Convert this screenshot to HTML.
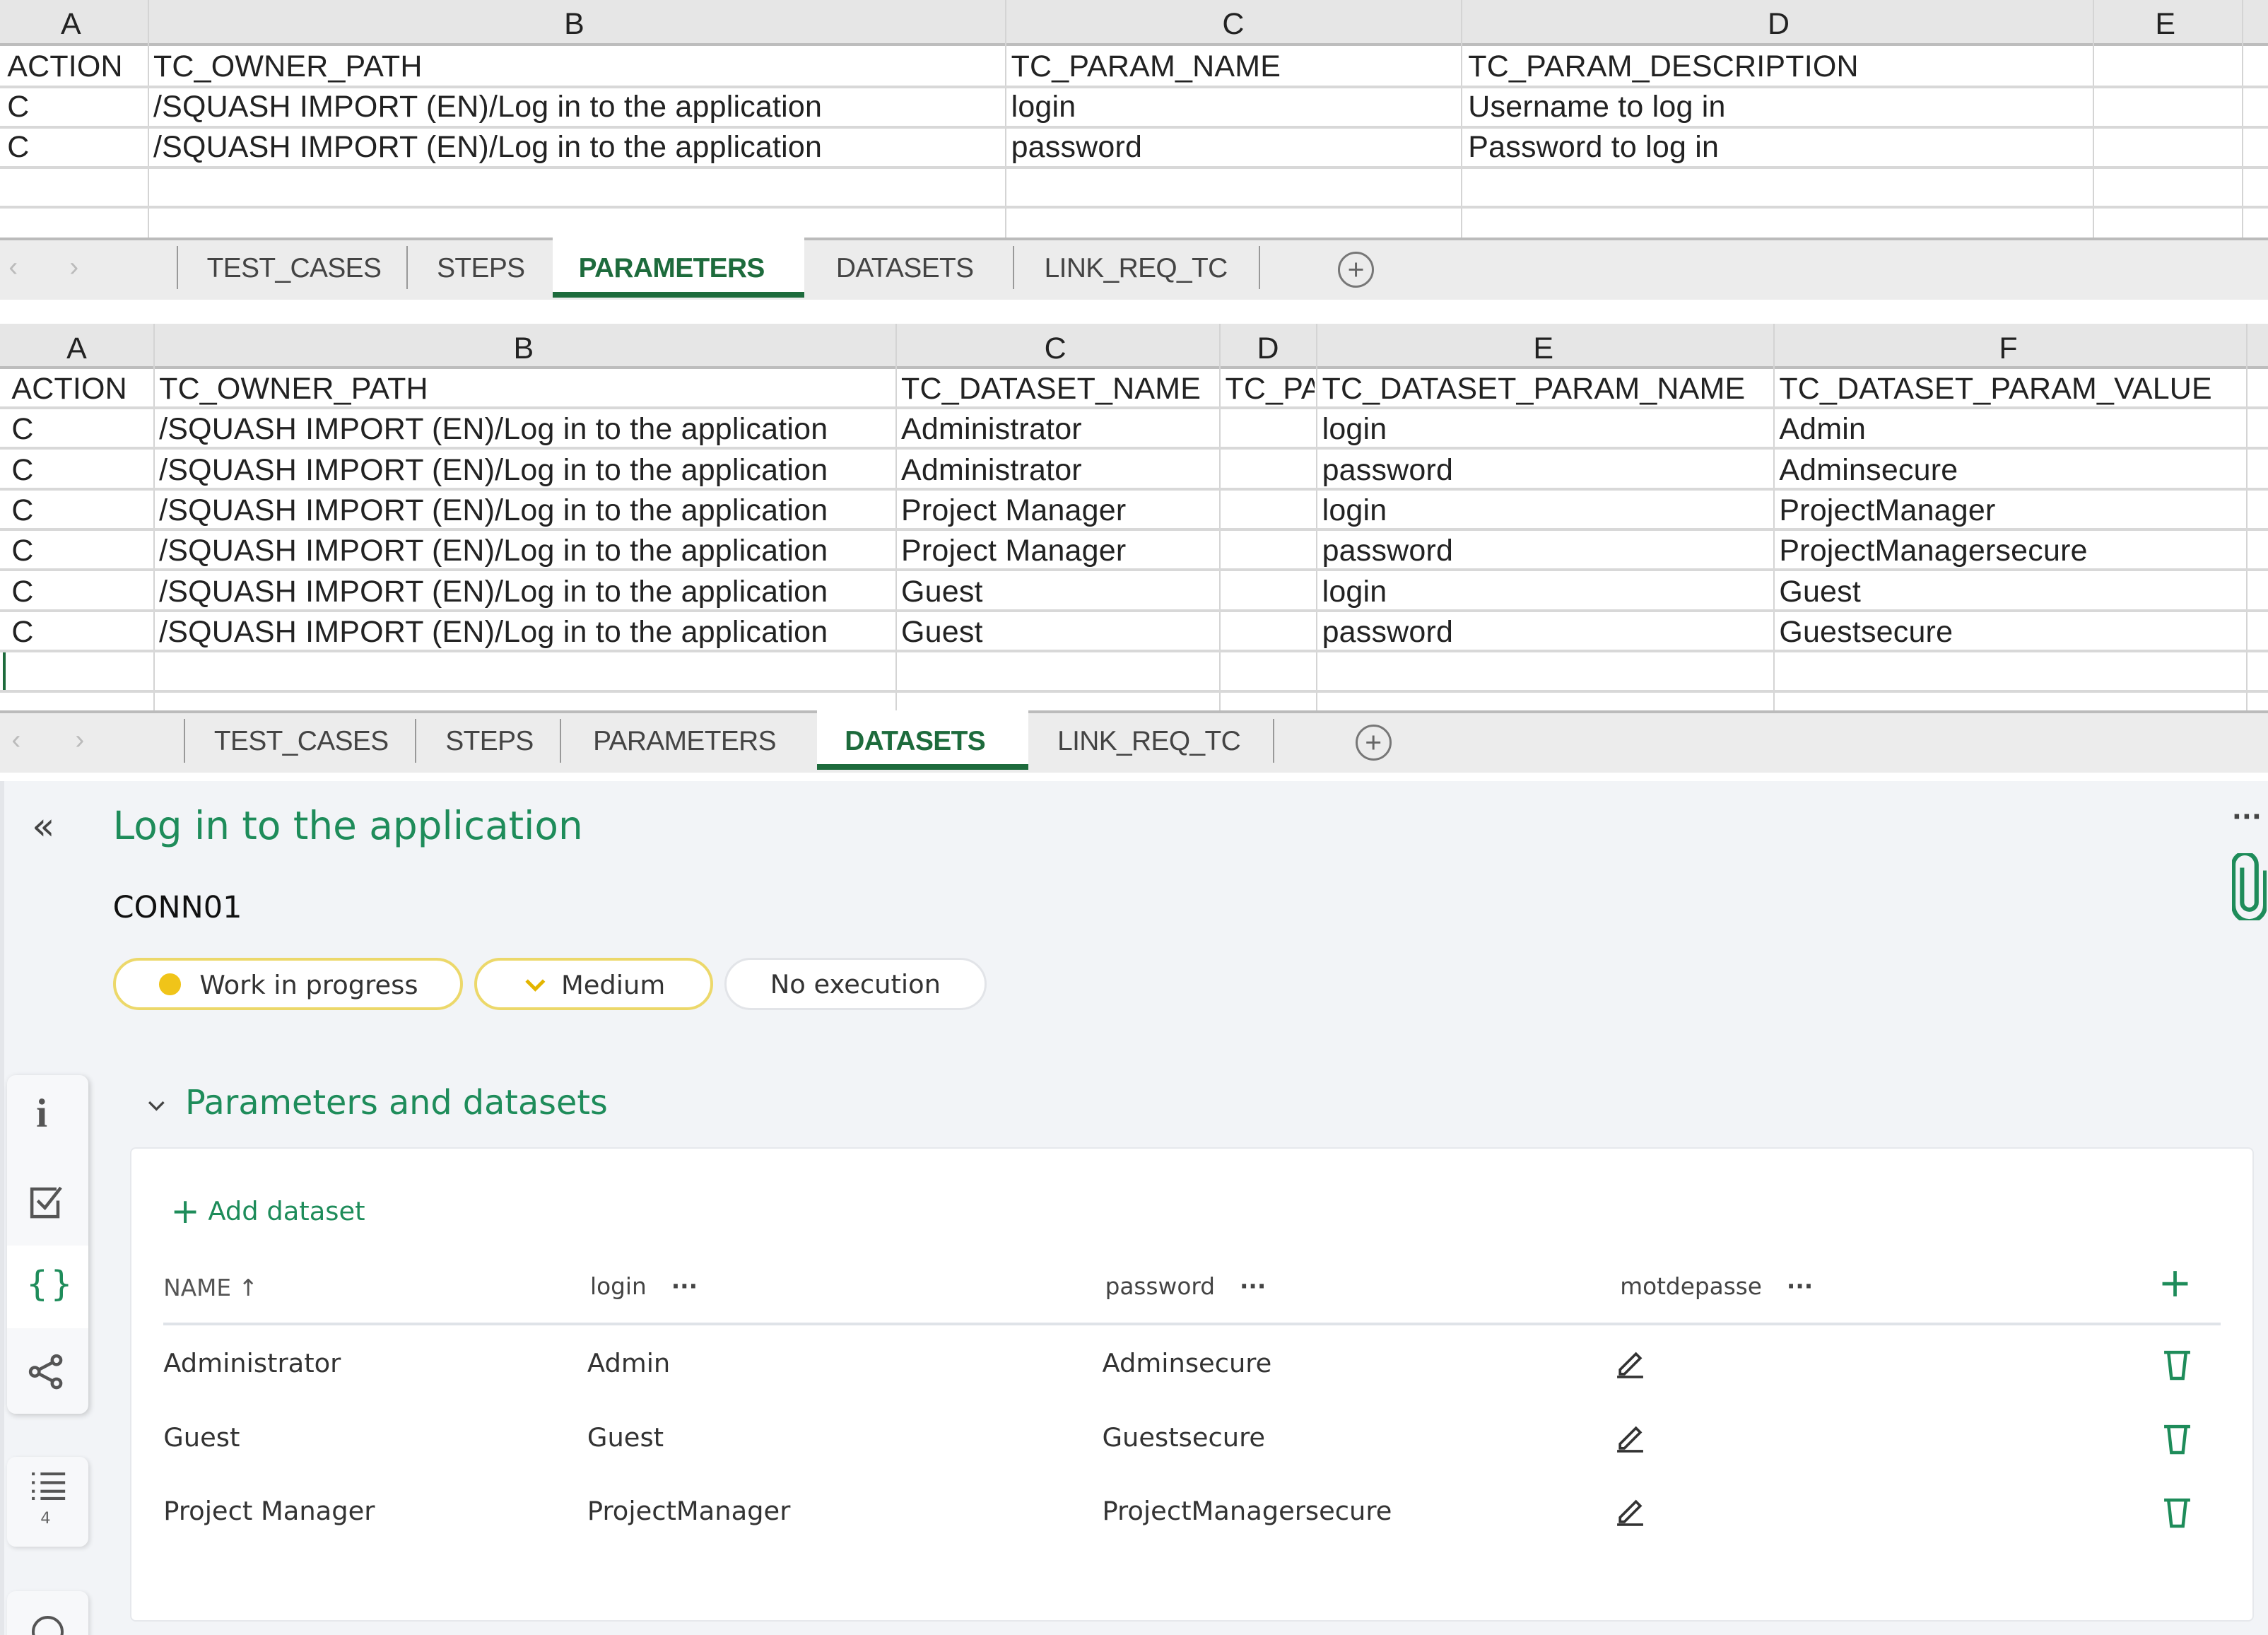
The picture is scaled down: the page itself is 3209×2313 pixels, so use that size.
<!DOCTYPE html>
<html><head><meta charset="utf-8"><style>
html,body{margin:0;padding:0;background:#fff;width:3209px;height:2313px;overflow:hidden}
#w{zoom:2.0466;width:1568px;height:1130px;position:relative;font-family:"Liberation Sans",sans-serif;overflow:hidden}
.a{position:absolute}
.hdr{background:#e6e6e6;border-bottom:2px solid #bdbdbd}
.cell{position:absolute;font-size:21px;color:#222;white-space:nowrap;letter-spacing:0.1px;top:0}
.vl{position:absolute;width:1px;background:#d4d4d4}
.hl{position:absolute;height:2px;background:#d8d8d8;left:0}
.tabs{background:#ececec;border-top:2px solid #bbb}
.tab{position:absolute;font-size:19px;color:#444;top:10px;letter-spacing:-0.3px}
.sep{position:absolute;width:1px;height:30px;background:#999;top:6px}
.app{font-family:"DejaVu Sans","Liberation Sans",sans-serif}
.pill{position:absolute;height:36px;border-radius:19px;box-sizing:border-box;font-size:18px;color:#333;line-height:34px}
.t{position:absolute;font-size:18px;color:#333;white-space:nowrap}
.g{color:#1e8c5a}
</style></head><body><div id="w">
<!-- sheet 1 -->
<div class="a hdr" style="left:0;top:0;width:1568px;height:30px"></div>
<div class="cell" style="left:42px;top:5px">A</div><div class="cell" style="left:390px;top:5px">B</div><div class="cell" style="left:845px;top:5px">C</div><div class="cell" style="left:1222px;top:5px">D</div><div class="cell" style="left:1490px;top:5px">E</div>
<div class="vl" style="left:102px;top:0;height:165px"></div><div class="vl" style="left:695px;top:0;height:165px"></div><div class="vl" style="left:1010px;top:0;height:165px"></div><div class="vl" style="left:1447px;top:0;height:165px"></div><div class="vl" style="left:1550px;top:0;height:165px"></div>
<div class="hl" style="top:59px;width:1568px"></div><div class="hl" style="top:87px;width:1568px"></div><div class="hl" style="top:115px;width:1568px"></div><div class="hl" style="top:142px;width:1568px"></div>
<div class="cell" style="left:5px;top:34px">ACTION</div><div class="cell" style="left:106px;top:34px">TC_OWNER_PATH</div><div class="cell" style="left:699px;top:34px">TC_PARAM_NAME</div><div class="cell" style="left:1015px;top:34px">TC_PARAM_DESCRIPTION</div>
<div class="cell" style="left:5px;top:62px">C</div><div class="cell" style="left:106px;top:62px">/SQUASH IMPORT (EN)/Log in to the application</div><div class="cell" style="left:699px;top:62px">login</div><div class="cell" style="left:1015px;top:62px">Username to log in</div>
<div class="cell" style="left:5px;top:90px">C</div><div class="cell" style="left:106px;top:90px">/SQUASH IMPORT (EN)/Log in to the application</div><div class="cell" style="left:699px;top:90px">password</div><div class="cell" style="left:1015px;top:90px">Password to log in</div>
<div class="a tabs" style="left:0;top:164px;width:1568px;height:41px"></div>
<div class="a" style="left:382px;top:164px;width:174px;height:38px;background:#fff;border-bottom:4px solid #1d6b3c"></div>
<div class="tab" style="left:6px;top:174px;color:#bbb">‹</div><div class="tab" style="left:48px;top:174px;color:#bbb">›</div>
<div class="sep" style="left:122px;top:170px"></div><div class="sep" style="left:281px;top:170px"></div><div class="sep" style="left:700px;top:170px"></div><div class="sep" style="left:870px;top:170px"></div>
<div class="tab" style="left:143px;top:175px">TEST_CASES</div><div class="tab" style="left:302px;top:175px">STEPS</div><div class="tab" style="left:400px;top:175px;color:#1d6b3c;font-weight:bold">PARAMETERS</div><div class="tab" style="left:578px;top:175px">DATASETS</div><div class="tab" style="left:722px;top:175px">LINK_REQ_TC</div>
<div class="a" style="left:925px;top:174px;width:22px;height:22px;border:1.5px solid #777;border-radius:50%;text-align:center;line-height:22px;color:#666;font-size:20px">+</div>
<!-- sheet 2 -->
<div class="a hdr" style="left:0;top:224px;width:1568px;height:29px"></div>
<div class="cell" style="left:46px;top:229px">A</div><div class="cell" style="left:355px;top:229px">B</div><div class="cell" style="left:722px;top:229px">C</div><div class="cell" style="left:869px;top:229px">D</div><div class="cell" style="left:1060px;top:229px">E</div><div class="cell" style="left:1382px;top:229px">F</div>
<div class="vl" style="left:106px;top:224px;height:268px"></div><div class="vl" style="left:619px;top:224px;height:268px"></div><div class="vl" style="left:843px;top:224px;height:268px"></div><div class="vl" style="left:910px;top:224px;height:268px"></div><div class="vl" style="left:1226px;top:224px;height:268px"></div><div class="vl" style="left:1553px;top:224px;height:268px"></div>
<div class="hl" style="top:281px;width:1568px"></div><div class="hl" style="top:309px;width:1568px"></div><div class="hl" style="top:337px;width:1568px"></div><div class="hl" style="top:365px;width:1568px"></div><div class="hl" style="top:393px;width:1568px"></div><div class="hl" style="top:421px;width:1568px"></div><div class="hl" style="top:449px;width:1568px"></div><div class="hl" style="top:477px;width:1568px"></div>
<div class="a" style="left:2px;top:451px;width:2px;height:26px;background:#1d6b3c"></div>
<div class="cell" style="left:8px;top:257px">ACTION</div><div class="cell" style="left:110px;top:257px">TC_OWNER_PATH</div><div class="cell" style="left:623px;top:257px">TC_DATASET_NAME</div><div class="cell" style="left:847px;top:257px;width:62px;overflow:hidden">TC_PARAM</div><div class="cell" style="left:914px;top:257px">TC_DATASET_PARAM_NAME</div><div class="cell" style="left:1230px;top:257px">TC_DATASET_PARAM_VALUE</div>
<div class="cell" style="left:8px;top:285px">C</div><div class="cell" style="left:110px;top:285px">/SQUASH IMPORT (EN)/Log in to the application</div><div class="cell" style="left:623px;top:285px">Administrator</div><div class="cell" style="left:914px;top:285px">login</div><div class="cell" style="left:1230px;top:285px">Admin</div>
<div class="cell" style="left:8px;top:313px">C</div><div class="cell" style="left:110px;top:313px">/SQUASH IMPORT (EN)/Log in to the application</div><div class="cell" style="left:623px;top:313px">Administrator</div><div class="cell" style="left:914px;top:313px">password</div><div class="cell" style="left:1230px;top:313px">Adminsecure</div>
<div class="cell" style="left:8px;top:341px">C</div><div class="cell" style="left:110px;top:341px">/SQUASH IMPORT (EN)/Log in to the application</div><div class="cell" style="left:623px;top:341px">Project Manager</div><div class="cell" style="left:914px;top:341px">login</div><div class="cell" style="left:1230px;top:341px">ProjectManager</div>
<div class="cell" style="left:8px;top:369px">C</div><div class="cell" style="left:110px;top:369px">/SQUASH IMPORT (EN)/Log in to the application</div><div class="cell" style="left:623px;top:369px">Project Manager</div><div class="cell" style="left:914px;top:369px">password</div><div class="cell" style="left:1230px;top:369px">ProjectManagersecure</div>
<div class="cell" style="left:8px;top:397px">C</div><div class="cell" style="left:110px;top:397px">/SQUASH IMPORT (EN)/Log in to the application</div><div class="cell" style="left:623px;top:397px">Guest</div><div class="cell" style="left:914px;top:397px">login</div><div class="cell" style="left:1230px;top:397px">Guest</div>
<div class="cell" style="left:8px;top:425px">C</div><div class="cell" style="left:110px;top:425px">/SQUASH IMPORT (EN)/Log in to the application</div><div class="cell" style="left:623px;top:425px">Guest</div><div class="cell" style="left:914px;top:425px">password</div><div class="cell" style="left:1230px;top:425px">Guestsecure</div>
<div class="a tabs" style="left:0;top:491px;width:1568px;height:41px"></div>
<div class="a" style="left:565px;top:491px;width:146px;height:37px;background:#fff;border-bottom:4px solid #1d6b3c"></div>
<div class="tab" style="left:8px;top:501px;color:#bbb">‹</div><div class="tab" style="left:52px;top:501px;color:#bbb">›</div>
<div class="sep" style="left:127px;top:497px"></div><div class="sep" style="left:287px;top:497px"></div><div class="sep" style="left:387px;top:497px"></div><div class="sep" style="left:880px;top:497px"></div>
<div class="tab" style="left:148px;top:502px">TEST_CASES</div><div class="tab" style="left:308px;top:502px">STEPS</div><div class="tab" style="left:410px;top:502px">PARAMETERS</div><div class="tab" style="left:584px;top:502px;color:#1d6b3c;font-weight:bold">DATASETS</div><div class="tab" style="left:731px;top:502px">LINK_REQ_TC</div>
<div class="a" style="left:937px;top:501px;width:22px;height:22px;border:1.5px solid #777;border-radius:50%;text-align:center;line-height:22px;color:#666;font-size:20px">+</div>
<!-- app -->
<div class="a app" style="left:0;top:540px;width:1568px;height:590px;background:#f2f4f7">
 <div class="a" style="left:0;top:0;width:3px;height:590px;background:#e4e6ea"></div>
 <div class="t" style="left:22px;top:16px;font-size:26px;color:#444">«</div>
 <div class="t g" style="left:78px;top:15px;font-size:26.8px">Log in to the application</div>
 <div class="t" style="left:78px;top:75px;font-size:21px;color:#111">CONN01</div>
 <div class="t" style="left:1543px;top:14px;font-size:18px;color:#444;font-weight:bold">···</div>
 <svg class="a" style="left:1543px;top:50px" width="24" height="46" viewBox="0 0 24 46"><path d="M7 10V34A5 5 0 0 0 17 34V8A8 8 0 0 0 1 8V36A11 11 0 0 0 23 36V12" fill="none" stroke="#1e8c5a" stroke-width="3"/></svg>
 <div class="pill" style="left:78px;top:122px;width:242px;background:#fff;border:2px solid #ecd86a;padding-left:58px"><span class="a" style="left:30px;top:9px;width:15px;height:15px;border-radius:50%;background:#f0c419"></span>Work in progress</div>
 <div class="pill" style="left:328px;top:122px;width:165px;background:#fff;border:2px solid #ecd86a;padding-left:58px"><svg class="a" style="left:32px;top:12px" width="16" height="10"><path d="M2 2L8 8L14 2" fill="none" stroke="#e3b500" stroke-width="2.4"/></svg>Medium</div>
 <div class="pill" style="left:501px;top:122px;width:181px;background:#fff;border:1.5px solid #e2e4e8;padding-left:30px">No execution</div>
 <div class="a" style="left:5px;top:203px;width:56px;height:234px;background:#f7f8fa;border-radius:6px;box-shadow:1px 1px 4px rgba(0,0,0,.18)"></div>
 <div class="a" style="left:5px;top:321px;width:56px;height:57px;background:#fff"></div>
 <div class="t" style="left:25px;top:214px;font-size:28px;color:#555;font-family:'Liberation Serif',serif;font-weight:bold">i</div>
 <svg class="a" style="left:19px;top:278px" width="26" height="26" viewBox="0 0 26 26"><path d="M20 4H3V23H21V12" fill="none" stroke="#555" stroke-width="2.2"/><path d="M7 12L12 17L23 3" fill="none" stroke="#555" stroke-width="2.2"/></svg>
 <div class="t" style="left:18px;top:333px;font-size:24px;color:#1e8c5a;letter-spacing:-3px">{ }</div>
 <svg class="a" style="left:19px;top:395px" width="26" height="26" viewBox="0 0 26 26"><g fill="none" stroke="#555" stroke-width="2.2"><circle cx="5" cy="13" r="3"/><circle cx="20" cy="5" r="3"/><circle cx="20" cy="21" r="3"/><path d="M8 11.5L17.5 6.5M8 14.5L17.5 19.5"/></g></svg>
 <div class="a" style="left:5px;top:467px;width:56px;height:62px;background:#f7f8fa;border-radius:6px;box-shadow:1px 1px 3px rgba(0,0,0,.12)"></div>
 <svg class="a" style="left:20px;top:476px" width="26" height="22" viewBox="0 0 26 22"><g stroke="#555" stroke-width="2"><path d="M8 3H25M8 9H25M8 15H25M8 20H25"/><path d="M2 3H4M2 9H4M2 15H4M2 20H4"/></g></svg>
 <div class="t" style="left:28px;top:503px;font-size:11px;color:#666">4</div>
 <div class="a" style="left:5px;top:560px;width:56px;height:40px;background:#f7f8fa;border-radius:6px;box-shadow:1px 1px 3px rgba(0,0,0,.12)"></div>
 <div class="a" style="left:22px;top:577px;width:18px;height:18px;border:2px solid #555;border-radius:50%"></div>
 <svg class="a" style="left:101px;top:220px" width="14" height="10"><path d="M2 2L7 7L12 2" fill="none" stroke="#444" stroke-width="1.6"/></svg>
 <div class="t g" style="left:128px;top:209px;font-size:23.3px">Parameters and datasets</div>
 <div class="a" style="left:90px;top:253px;width:1466px;height:326px;background:#fff;border:1px solid #e6e8ec;border-radius:4px"></div>
 <div class="t g" style="left:118px;top:281px;font-size:18px"><span style="font-size:24px;position:relative;top:2px">+</span> Add dataset</div>
 <div class="t" style="left:113px;top:341px;font-size:16px;color:#555">NAME ↑</div>
 <div class="t" style="left:408px;top:340px;font-size:16px;color:#444">login <span style="margin-left:12px;font-weight:bold">···</span></div>
 <div class="t" style="left:764px;top:340px;font-size:16px;color:#444">password <span style="margin-left:12px;font-weight:bold">···</span></div>
 <div class="t" style="left:1120px;top:340px;font-size:16px;color:#444">motdepasse <span style="margin-left:12px;font-weight:bold">···</span></div>
 <div class="t g" style="left:1492px;top:330px;font-size:28px">+</div>
 <div class="a" style="left:113px;top:374px;width:1422px;height:2px;background:#dfe3e8"></div>
 <div class="t" style="left:113px;top:392px">Administrator</div><div class="t" style="left:406px;top:392px">Admin</div><div class="t" style="left:762px;top:392px">Adminsecure</div>
 <div class="t" style="left:113px;top:443px">Guest</div><div class="t" style="left:406px;top:443px">Guest</div><div class="t" style="left:762px;top:443px">Guestsecure</div>
 <div class="t" style="left:113px;top:494px">Project Manager</div><div class="t" style="left:406px;top:494px">ProjectManager</div><div class="t" style="left:762px;top:494px">ProjectManagersecure</div>
 <svg class="a" style="left:1116px;top:391px" width="22" height="22" viewBox="0 0 22 22"><path d="M4 16L15 5L18 8L7 19H4Z M2 21H20" fill="none" stroke="#333" stroke-width="1.8"/></svg>
 <svg class="a" style="left:1116px;top:442px" width="22" height="22" viewBox="0 0 22 22"><path d="M4 16L15 5L18 8L7 19H4Z M2 21H20" fill="none" stroke="#333" stroke-width="1.8"/></svg>
 <svg class="a" style="left:1116px;top:493px" width="22" height="22" viewBox="0 0 22 22"><path d="M4 16L15 5L18 8L7 19H4Z M2 21H20" fill="none" stroke="#333" stroke-width="1.8"/></svg>
 <svg class="a" style="left:1494px;top:392px" width="22" height="24" viewBox="0 0 22 24"><path d="M2 3H20M5 3L7 21H15L17 3" fill="none" stroke="#1e8c5a" stroke-width="2.2"/></svg>
 <svg class="a" style="left:1494px;top:443px" width="22" height="24" viewBox="0 0 22 24"><path d="M2 3H20M5 3L7 21H15L17 3" fill="none" stroke="#1e8c5a" stroke-width="2.2"/></svg>
 <svg class="a" style="left:1494px;top:494px" width="22" height="24" viewBox="0 0 22 24"><path d="M2 3H20M5 3L7 21H15L17 3" fill="none" stroke="#1e8c5a" stroke-width="2.2"/></svg>
</div>
</div></body></html>
